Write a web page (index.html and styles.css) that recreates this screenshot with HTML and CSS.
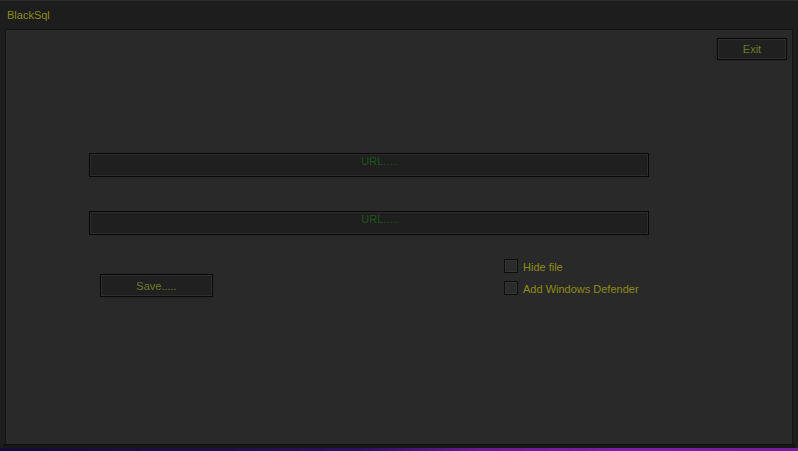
FILE: index.html
```html
<!DOCTYPE html>
<html>
<head>
<meta charset="utf-8">
<link rel="stylesheet" href="styles.css">
</head>
<body>
<div class="window">
  <div class="titlebar"><span class="title">BlackSql</span></div>
  <div class="panel">
    <div class="top-row">
      <button class="btn btn-exit">Exit</button>
    </div>
    <div class="fields">
      <div class="textbox"><span class="placeholder">URL.....</span></div>
      <div class="textbox"><span class="placeholder">URL.....</span></div>
    </div>
    <div class="bottom-row">
      <button class="btn btn-save">Save.....</button>
      <div class="checks">
        <label class="check"><span class="box"></span><span class="lbl">Hide file</span></label>
        <label class="check"><span class="box"></span><span class="lbl">Add Windows Defender</span></label>
      </div>
    </div>
  </div>
  <div class="bottom-edge"></div>
  <div class="glow"></div>
</div>
</body>
</html>
```
FILE: styles.css
```css
* { box-sizing: border-box; }
html, body { margin: 0; padding: 0; background: #1c1c1c; }
body { width: 798px; height: 451px; overflow: hidden; font-family: "Liberation Sans", Arial, sans-serif; font-size: 11px; }
.window { width: 798px; height: 451px; display: flex; flex-direction: column; background: #1d1d1d; border-top: 1px solid #2c2c2c; }
.titlebar { height: 28px; display: flex; align-items: center; padding-left: 7px; padding-bottom: 1px; }
.title { color: #8c8c18; font-size: 11px; }
.panel { margin: 0 5px 0 5px; height: 415px; background: #292929; border-top: 1px solid #141414; border-left: 1px solid #141414; border-right: 1px solid #141414; display: flex; flex-direction: column; }
.top-row { display: flex; justify-content: flex-end; padding: 8px 5px 0 0; }
.btn { font-family: "Liberation Sans", Arial, sans-serif; font-size: 11px; background: #202020; border: 1px solid #0a0a0a; box-shadow: inset 0 0 0 1px #2e2e2e, 0 0 2px #1e1e1e; color: #6d7a2a; padding: 0; cursor: default; }
.btn-exit { width: 70px; height: 22px; }
.fields { display: flex; flex-direction: column; padding: 93px 0 0 83px; gap: 34px; }
.textbox { width: 560px; height: 24px; background: #1f1f1f; border: 1px solid #080808; box-shadow: inset 0 0 0 1px #2c2c2c; display: flex; align-items: flex-start; justify-content: center; padding-top: 1px; }
.placeholder { color: #1b541b; font-size: 11px; margin-left: 22px; }
.bottom-row { display: flex; padding: 24px 0 0 94px; }
.btn-save { width: 113px; height: 23px; margin-top: 15px; }
.checks { display: flex; flex-direction: column; gap: 8px; margin-left: 291px; }
.check { display: flex; align-items: center; gap: 5px; height: 14px; }
.box { width: 14px; height: 14px; border: 1px solid #0d0d0d; background: #2b2b2b; box-shadow: inset 0 0 0 1px #333; }
.lbl { color: #8c8c14; font-size: 11px; padding-top: 1px; }
.bottom-edge { height: 4px; margin: 0 3px; background: #161616; border-top: 1px solid #111; }
.glow { height: 3px; background: linear-gradient(90deg, #120d3a 0%, #1c1145 25%, #2a1260 45%, #6a1a92 60%, #7e1ea8 80%, #731c9a 100%); }
```
